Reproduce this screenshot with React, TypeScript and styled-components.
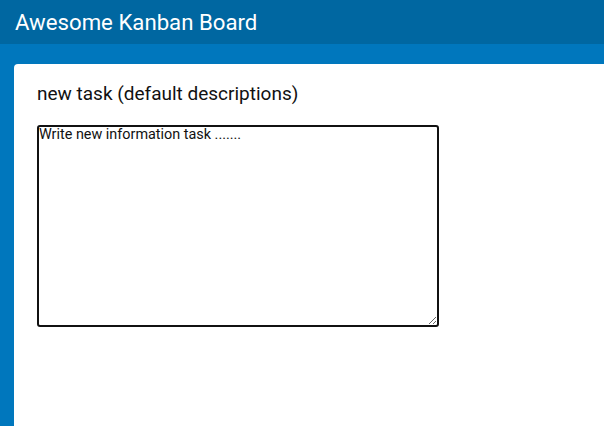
import React from "react";
import styled, { createGlobalStyle } from "styled-components";

const GlobalStyle = createGlobalStyle`
  html, body {
    margin: 0;
    padding: 0;
    height: 100%;
    overflow: hidden;
  }
  body {
    font-family: Roboto, "Liberation Sans", Arial, sans-serif;
    background: #0077bd;
  }
`;

const Page = styled.div`
  display: flex;
  flex-direction: column;
  height: 426px;
  overflow: hidden;
  background: #0077bd;
`;

const Header = styled.header`
  flex: none;
  height: 44px;
  background: #0067a1;
  display: flex;
  align-items: center;
  padding: 0 15px;
  box-sizing: border-box;
`;

const Title = styled.h1`
  margin: 0;
  color: #ffffff;
  font-size: 22.2px;
  font-weight: 400;
  font-family: Roboto, "Liberation Sans", Arial, sans-serif;
`;

const Main = styled.main`
  flex: 1;
  display: flex;
  padding: 20px 0 0 14px;
  min-height: 0;
`;

const Card = styled.section`
  flex: 1;
  background: #ffffff;
  border-radius: 4px 0 0 0;
  padding: 18px 23px 0;
  display: flex;
  flex-direction: column;
  align-items: flex-start;
  gap: 20px;
`;

const CardTitle = styled.h2`
  margin: 0;
  font-size: 19px;
  font-weight: 400;
  color: #111111;
  font-family: Roboto, "Liberation Sans", Arial, sans-serif;
`;

const TextArea = styled.textarea`
  width: 402px;
  height: 202px;
  box-sizing: border-box;
  border: 2px solid #111111;
  border-radius: 3px;
  padding: 0;
  font-family: Roboto, "Liberation Sans", Arial, sans-serif;
  font-size: 14.4px;
  line-height: 1.15;
  color: #111;
  outline: none;
  resize: both;
  &::placeholder {
    color: #111;
  }
`;

export default function App() {
  return (
    <>
      <GlobalStyle />
      <Page>
        <Header>
          <Title>Awesome Kanban Board</Title>
        </Header>
        <Main>
          <Card>
            <CardTitle>new task (default descriptions)</CardTitle>
            <TextArea placeholder="Write new information task ......." />
          </Card>
        </Main>
      </Page>
    </>
  );
}
